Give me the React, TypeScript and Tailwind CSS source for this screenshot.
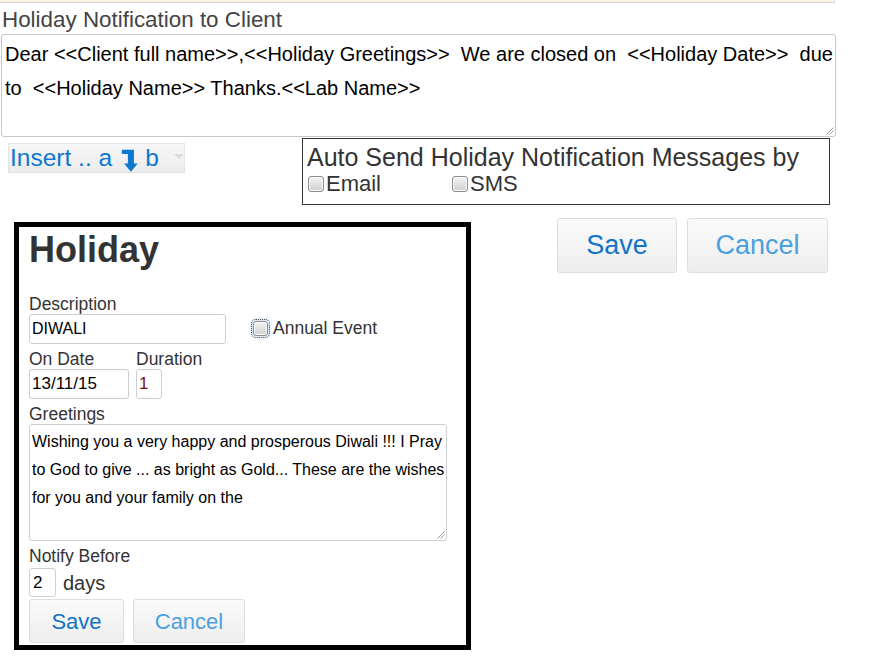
import React from "react";

function Grip() {
  return (
    <svg className="absolute right-[1px] bottom-[1px]" width="9" height="9" viewBox="0 0 9 9">
      <path d="M8.5 1.5 L1.5 8.5 M8.5 4.5 L4.5 8.5" stroke="#9a9a9a" strokeWidth="1" />
    </svg>
  );
}

function Check({ focus = false }: { focus?: boolean }) {
  return (
    <span
      className={
        focus
          ? "inline-block shrink-0 w-[15px] h-[15px] rounded-[3px] border border-[#8c8c8c] bg-linear-to-b from-[#f3f3f3] to-[#d0d0d0] shadow-[inset_0_0_0_1px_#fafafa,0_0_4px_2px_#cfe3f7] outline-1 outline-dotted outline-[#444] outline-offset-[1px]"
          : "inline-block shrink-0 w-[16px] h-[16px] rounded-[3px] border border-[#8c8c8c] bg-linear-to-b from-[#f3f3f3] to-[#d0d0d0] shadow-[inset_0_0_0_1px_#fafafa]"
      }
    />
  );
}

export default function App() {
  return (
    <div className="w-[876px] h-[664px] bg-white font-['Liberation_Sans',Arial,sans-serif] text-[#333] overflow-hidden">
      <div className="w-[835px] h-[3px] bg-[#fcf6e6] border-b border-r border-[#d9d6cf]" />
      <div className="mt-[3px] ml-[2px] text-[22.4px] leading-[28px] text-[#444]">Holiday Notification to Client</div>
      <div className="relative ml-[1px] w-[835px] h-[103px] border border-[#c8c8c8] rounded-[3px] pl-[3px] pt-[2px] text-[20px] leading-[34px] text-black whitespace-pre">
        <div>{"Dear <<Client full name>>,<<Holiday Greetings>>  We are closed on  <<Holiday Date>>  due"}</div>
        <div>{"to  <<Holiday Name>> Thanks.<<Lab Name>>"}</div>
        <Grip />
      </div>

      <div className="flex items-start">
        <div className="ml-[8px] mt-[6px] w-[177px] h-[30px] flex items-start border border-[#e2e2e2] bg-linear-to-b from-[#f7f7f7] to-[#ececec] pl-[1px] text-[24.5px] leading-[28px] text-[#0b78d1]">
          <span className="whitespace-pre">Insert .. a</span>
          <svg className="ml-[9px] mt-[4px]" width="20" height="26" viewBox="0 0 20 26">
            <polygon points="1,0 15,0 15,16 19.5,16 11.5,25.5 3.5,16 8,16 8,5 1,5" fill="#0b78d1" />
          </svg>
          <span className="ml-[7px]">b</span>
          <span className="ml-[15px] mt-[10px] w-0 h-0 border-l-[5px] border-r-[5px] border-t-[5px] border-l-transparent border-r-transparent border-t-[#dcdcdc]" />
        </div>
        <div className="ml-[117px] mt-[1px] w-[528px] border border-[#333] pl-[4px] pt-[4px] pb-[7px]">
          <div className="text-[25px] leading-[28px] text-[#333]">Auto Send Holiday Notification Messages by</div>
          <div className="flex items-center text-[22px] leading-[26px] text-[#333]">
            <div className="flex items-center w-[144px] ml-[1px]">
              <Check />
              <span className="ml-[2px]">Email</span>
            </div>
            <div className="flex items-center">
              <Check />
              <span className="ml-[2px]">SMS</span>
            </div>
          </div>
        </div>
      </div>

      <div className="flex items-start">
        <div className="ml-[14px] mt-[17px] w-[457px] border-[5px] border-black pl-[10px] pt-[3px] pb-[2px]">
          <div className="text-[36px] leading-[40px] font-bold text-[#333]">Holiday</div>

          <div className="flex items-end mt-[24px]">
            <div className="w-[197px]">
              <div className="text-[17.5px] leading-[20px]">Description</div>
              <div className="h-[30px] border border-[#cfcfcf] rounded-[3px] pl-[2px] flex items-center text-[16px] text-black">DIWALI</div>
            </div>
            <div className="flex items-center h-[20px] ml-[27px] mb-[6px]">
              <Check focus />
              <span className="ml-[5px] text-[17.5px] leading-[20px]">Annual Event</span>
            </div>
          </div>

          <div className="flex mt-[5px]">
            <div className="w-[100px]">
              <div className="text-[17.5px] leading-[20px]">On Date</div>
              <div className="h-[30px] border border-[#cfcfcf] rounded-[3px] pl-[2px] flex items-center text-[17px] text-black">13/11/15</div>
            </div>
            <div className="ml-[7px]">
              <div className="text-[17.5px] leading-[20px]">Duration</div>
              <div className="w-[26px] h-[30px] border border-[#cfcfcf] rounded-[3px] pl-[2px] flex items-center text-[17px] text-[#7a1212]">1</div>
            </div>
          </div>

          <div className="mt-[5px] text-[17.5px] leading-[20px]">Greetings</div>
          <div className="relative w-[418px] h-[117px] border border-[#cfcfcf] rounded-[3px] pl-[2px] pt-[3px] text-[16px] leading-[28px] text-black whitespace-pre">
            <div>Wishing you a very happy and prosperous Diwali !!! I Pray</div>
            <div>to God to give ... as bright as Gold... These are the wishes</div>
            <div>for you and your family on the</div>
            <Grip />
          </div>

          <div className="mt-[5px] text-[17.5px] leading-[20px]">Notify Before</div>
          <div className="flex items-center mt-[2px]">
            <div className="w-[27px] h-[29px] border border-[#cfcfcf] rounded-[3px] pl-[3px] flex items-center text-[17px] text-black">2</div>
            <span className="ml-[7px] text-[20px] leading-[24px]">days</span>
          </div>

          <div className="flex mt-[2px]">
            <div className="w-[95px] h-[44px] flex items-center justify-center rounded-[3px] border border-[#dedede] bg-linear-to-b from-[#fafafa] to-[#eeeeee] text-[22px] text-[#1174c8]">Save</div>
            <div className="ml-[9px] w-[112px] h-[44px] flex items-center justify-center rounded-[3px] border border-[#dedede] bg-linear-to-b from-[#fafafa] to-[#eeeeee] text-[22px] text-[#4a9fe0]">Cancel</div>
          </div>
        </div>

        <div className="flex ml-[86px] mt-[13px]">
          <div className="w-[120px] h-[55px] flex items-center justify-center rounded-[3px] border border-[#dedede] bg-linear-to-b from-[#fafafa] to-[#eeeeee] text-[27px] text-[#1174c8]">Save</div>
          <div className="ml-[10px] w-[141px] h-[55px] flex items-center justify-center rounded-[3px] border border-[#dedede] bg-linear-to-b from-[#fafafa] to-[#eeeeee] text-[27px] text-[#4a9fe0]">Cancel</div>
        </div>
      </div>
    </div>
  );
}
